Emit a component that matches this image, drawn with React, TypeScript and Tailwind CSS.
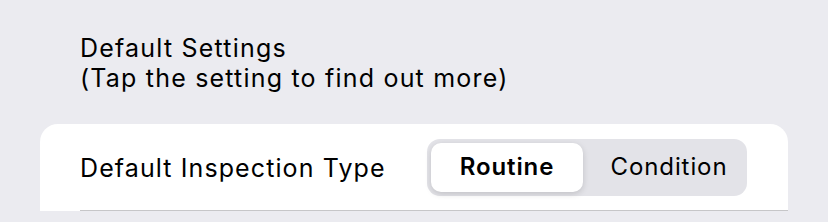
export default function App() {
  return (
    <div className="h-[222px] w-full overflow-hidden bg-[#ebebf0] font-['Inter','Liberation_Sans',sans-serif] text-black">
      {/* section header */}
      <div className="pl-[80px] pt-[33px] text-[25px] leading-[30px] tracking-[1.2px]">
        <div>Default Settings</div>
        <div>(Tap the setting to find out more)</div>
      </div>

      {/* card */}
      <div className="mx-[40px] mt-[31px] rounded-t-[18px] bg-white pl-[40px]">
        <div className="flex h-[87px] items-center justify-between border-b border-[#c6c6c8] pr-[41px]">
          <span className="mt-[3px] text-[25px] tracking-[1.1px]">Default Inspection Type</span>
          <div className="flex h-[57px] w-[320px] rounded-[13px] bg-[#e3e3e8] p-[4px] text-[24px] tracking-[0.9px]">
            <div className="flex w-[152px] items-center justify-center rounded-[10px] bg-white font-semibold shadow-[0_2px_6px_rgba(0,0,0,0.15)]">
              Routine
            </div>
            <div className="flex flex-1 items-center justify-center pl-[12px]">Condition</div>
          </div>
        </div>
      </div>
    </div>
  );
}
